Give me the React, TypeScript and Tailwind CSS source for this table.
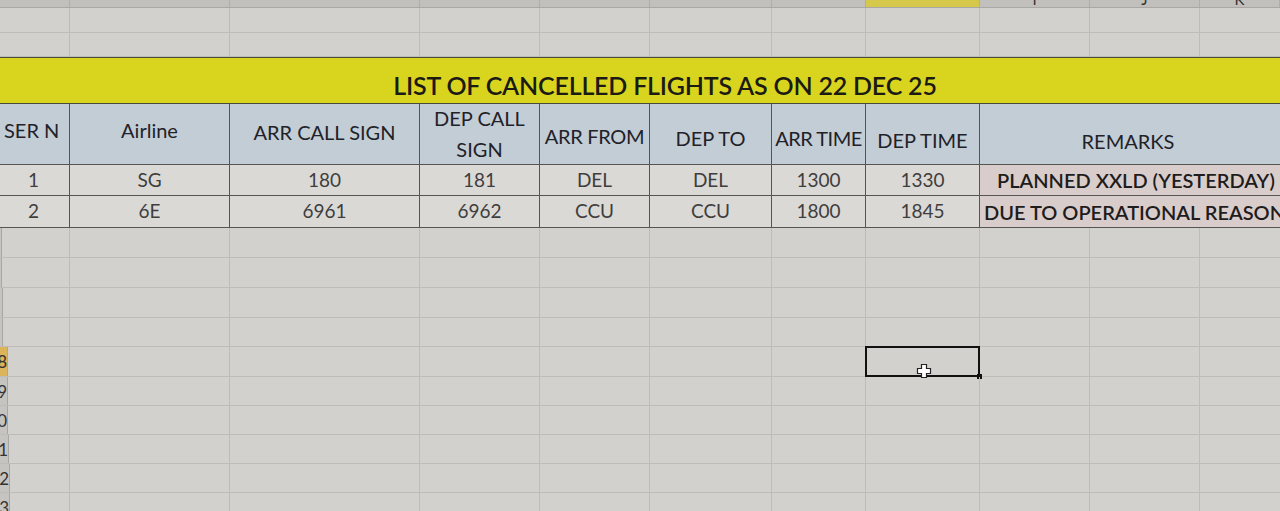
import React from 'react'

// column widths A..K
const colW = [
  'w-[70px]',
  'w-[160px]',
  'w-[190px]',
  'w-[120px]',
  'w-[110px]',
  'w-[122px]',
  'w-[94px]',
  'w-[114px]',
  'w-[110px]',
  'w-[110px]',
  'w-[80px]',
]
// only the right-hand letters show above the sheet
const letters = ['', '', '', '', '', '', '', '', 'I', 'J', 'K']

const flights = [
  { ser: '1', airline: 'SG', arrCs: '180', depCs: '181', from: 'DEL', to: 'DEL', arr: '1300', dep: '1330', remark: 'PLANNED XXLD (YESTERDAY)' },
  { ser: '2', airline: '6E', arrCs: '6961', depCs: '6962', from: 'CCU', to: 'CCU', arr: '1800', dep: '1845', remark: 'DUE TO OPERATIONAL REASONS' },
]

function EmptyRow({ h, num, strip, selected }: { h: string; num?: number; strip?: string; selected?: boolean }) {
  return (
    <div className={`flex ${h} border-b border-[#bebcb8]`}>
      {colW.map((w, i) => (
        <div key={i} className={`${w} shrink-0 relative flex border-r border-[#bebcb8] last:border-r-0`}>
          {i === 0 && strip && (
            <div
              className={`${strip} h-full overflow-hidden flex items-center justify-end border-r border-[#a9a7a4] ${
                selected ? 'bg-[#dcb45a]' : 'bg-[#c6c4c1]'
              }`}
            >
              {num && <span className="text-[17px] leading-none text-[#333] whitespace-nowrap">{num}</span>}
            </div>
          )}
          {i === 7 && selected && (
            <>
              <div className="absolute -inset-[1px] border-2 border-[#111]" />
              <div className="absolute -right-[3px] -bottom-[3px] w-[5px] h-[5px] bg-[#111]" />
              <svg className="absolute left-[50px] top-[16px]" width="16" height="16" viewBox="0 0 16 16">
                <path
                  d="M5.5 1.5h5v4h4v5h-4v4h-5v-4h-4v-5h4z"
                  fill="#fff"
                  stroke="#222"
                  strokeWidth="1.2"
                />
              </svg>
            </>
          )}
        </div>
      ))}
    </div>
  )
}

export default function App() {
  return (
    <div className="w-[1280px] h-[511px] overflow-hidden bg-[#d3d1cd] font-['Lato','Open_Sans',sans-serif] text-[#222]">
      {/* column letters */}
      <div className="flex h-[8px] bg-[#c2c0bd] border-b border-[#aaa8a5] overflow-hidden">
        {colW.map((w, i) => (
          <div
            key={i}
            className={`${w} shrink-0 flex justify-center border-r border-[#b0aeab] ${i === 7 ? 'bg-[#d6c84a]' : ''}`}
          >
            {letters[i] && <span className="text-[15px] leading-none -mt-[8px] text-[#333]">{letters[i]}</span>}
          </div>
        ))}
      </div>

      <EmptyRow h="h-[25px]" />
      <EmptyRow h="h-[24px]" />

      {/* title */}
      <div className="h-[47px] bg-[#d9d51f] border-y border-[#4a4a3a] flex items-center justify-center pl-[50px] pt-[10px]">
        <span className="text-[25px] font-semibold tracking-[-0.2px] text-[#1b1b14]">
          LIST OF CANCELLED FLIGHTS AS ON 22 DEC 25
        </span>
      </div>

      {/* header */}
      <div className="flex h-[61px] bg-[#c3cdd6] border-b border-[#555] text-[20px] text-[#1f2228]">
        <div className={`${colW[0]} shrink-0 flex items-center pl-[4px] pb-[8px] border-r border-[#555] whitespace-nowrap overflow-hidden`}>SER N</div>
        <div className={`${colW[1]} shrink-0 flex items-center justify-center pb-[8px] border-r border-[#555]`}>Airline</div>
        <div className={`${colW[2]} shrink-0 flex items-center justify-center pb-[4px] border-r border-[#555] whitespace-nowrap`}>ARR CALL SIGN</div>
        <div className={`${colW[3]} shrink-0 flex flex-col items-center justify-center leading-[31px] border-r border-[#555]`}>
          <span>DEP CALL</span>
          <span>SIGN</span>
        </div>
        <div className={`${colW[4]} shrink-0 flex items-center justify-center pt-[3px] border-r border-[#555] whitespace-nowrap tracking-[-0.3px]`}>ARR FROM</div>
        <div className={`${colW[5]} shrink-0 flex items-center justify-center pt-[7px] border-r border-[#555]`}>DEP TO</div>
        <div className={`${colW[6]} shrink-0 flex items-center justify-center pt-[7px] border-r border-[#555] whitespace-nowrap tracking-[-0.5px]`}>ARR TIME</div>
        <div className={`${colW[7]} shrink-0 flex items-center justify-center pt-[11px] border-r border-[#555] whitespace-nowrap`}>DEP TIME</div>
        <div className="w-[300px] shrink-0 flex items-center justify-center pt-[13px] pr-[4px]">REMARKS</div>
      </div>

      {/* data rows */}
      {flights.map((f, r) => (
        <div key={r} className={`flex ${r === 0 ? 'h-[31px]' : 'h-[32px]'} border-b border-[#555] text-[19px] text-[#3e3e3e]`}>
          {[f.ser, f.airline, f.arrCs, f.depCs, f.from, f.to, f.arr, f.dep].map((v, i) => (
            <div
              key={i}
              className={`${colW[i]} shrink-0 flex items-center justify-center bg-[#dbd9d5] border-r border-[#555] ${i === 0 ? 'pr-[2px]' : ''}`}
            >
              {v}
            </div>
          ))}
          <div className="w-[300px] shrink-0 flex items-center pl-[4px] bg-[#d9cdcb] text-[20px] font-semibold text-[#1e1c1c] whitespace-nowrap overflow-hidden">
            {r === 0 ? <span className="pl-[13px]">{f.remark}</span> : f.remark}
          </div>
        </div>
      ))}

      {/* empty sheet rows */}
      <EmptyRow h="h-[30px]" strip="w-[2px]" />
      <EmptyRow h="h-[30px]" strip="w-[2px]" />
      <EmptyRow h="h-[30px]" strip="w-[3px]" />
      <EmptyRow h="h-[29px]" strip="w-[3px]" />
      <EmptyRow h="h-[30px]" num={18} strip="w-[8px]" selected />
      <EmptyRow h="h-[29px]" num={19} strip="w-[8px]" />
      <EmptyRow h="h-[29px]" num={20} strip="w-[8px]" />
      <EmptyRow h="h-[29px]" num={21} strip="w-[9px]" />
      <EmptyRow h="h-[29px]" num={22} strip="w-[10px]" />
      <EmptyRow h="h-[29px]" num={23} strip="w-[10px]" />
    </div>
  )
}
